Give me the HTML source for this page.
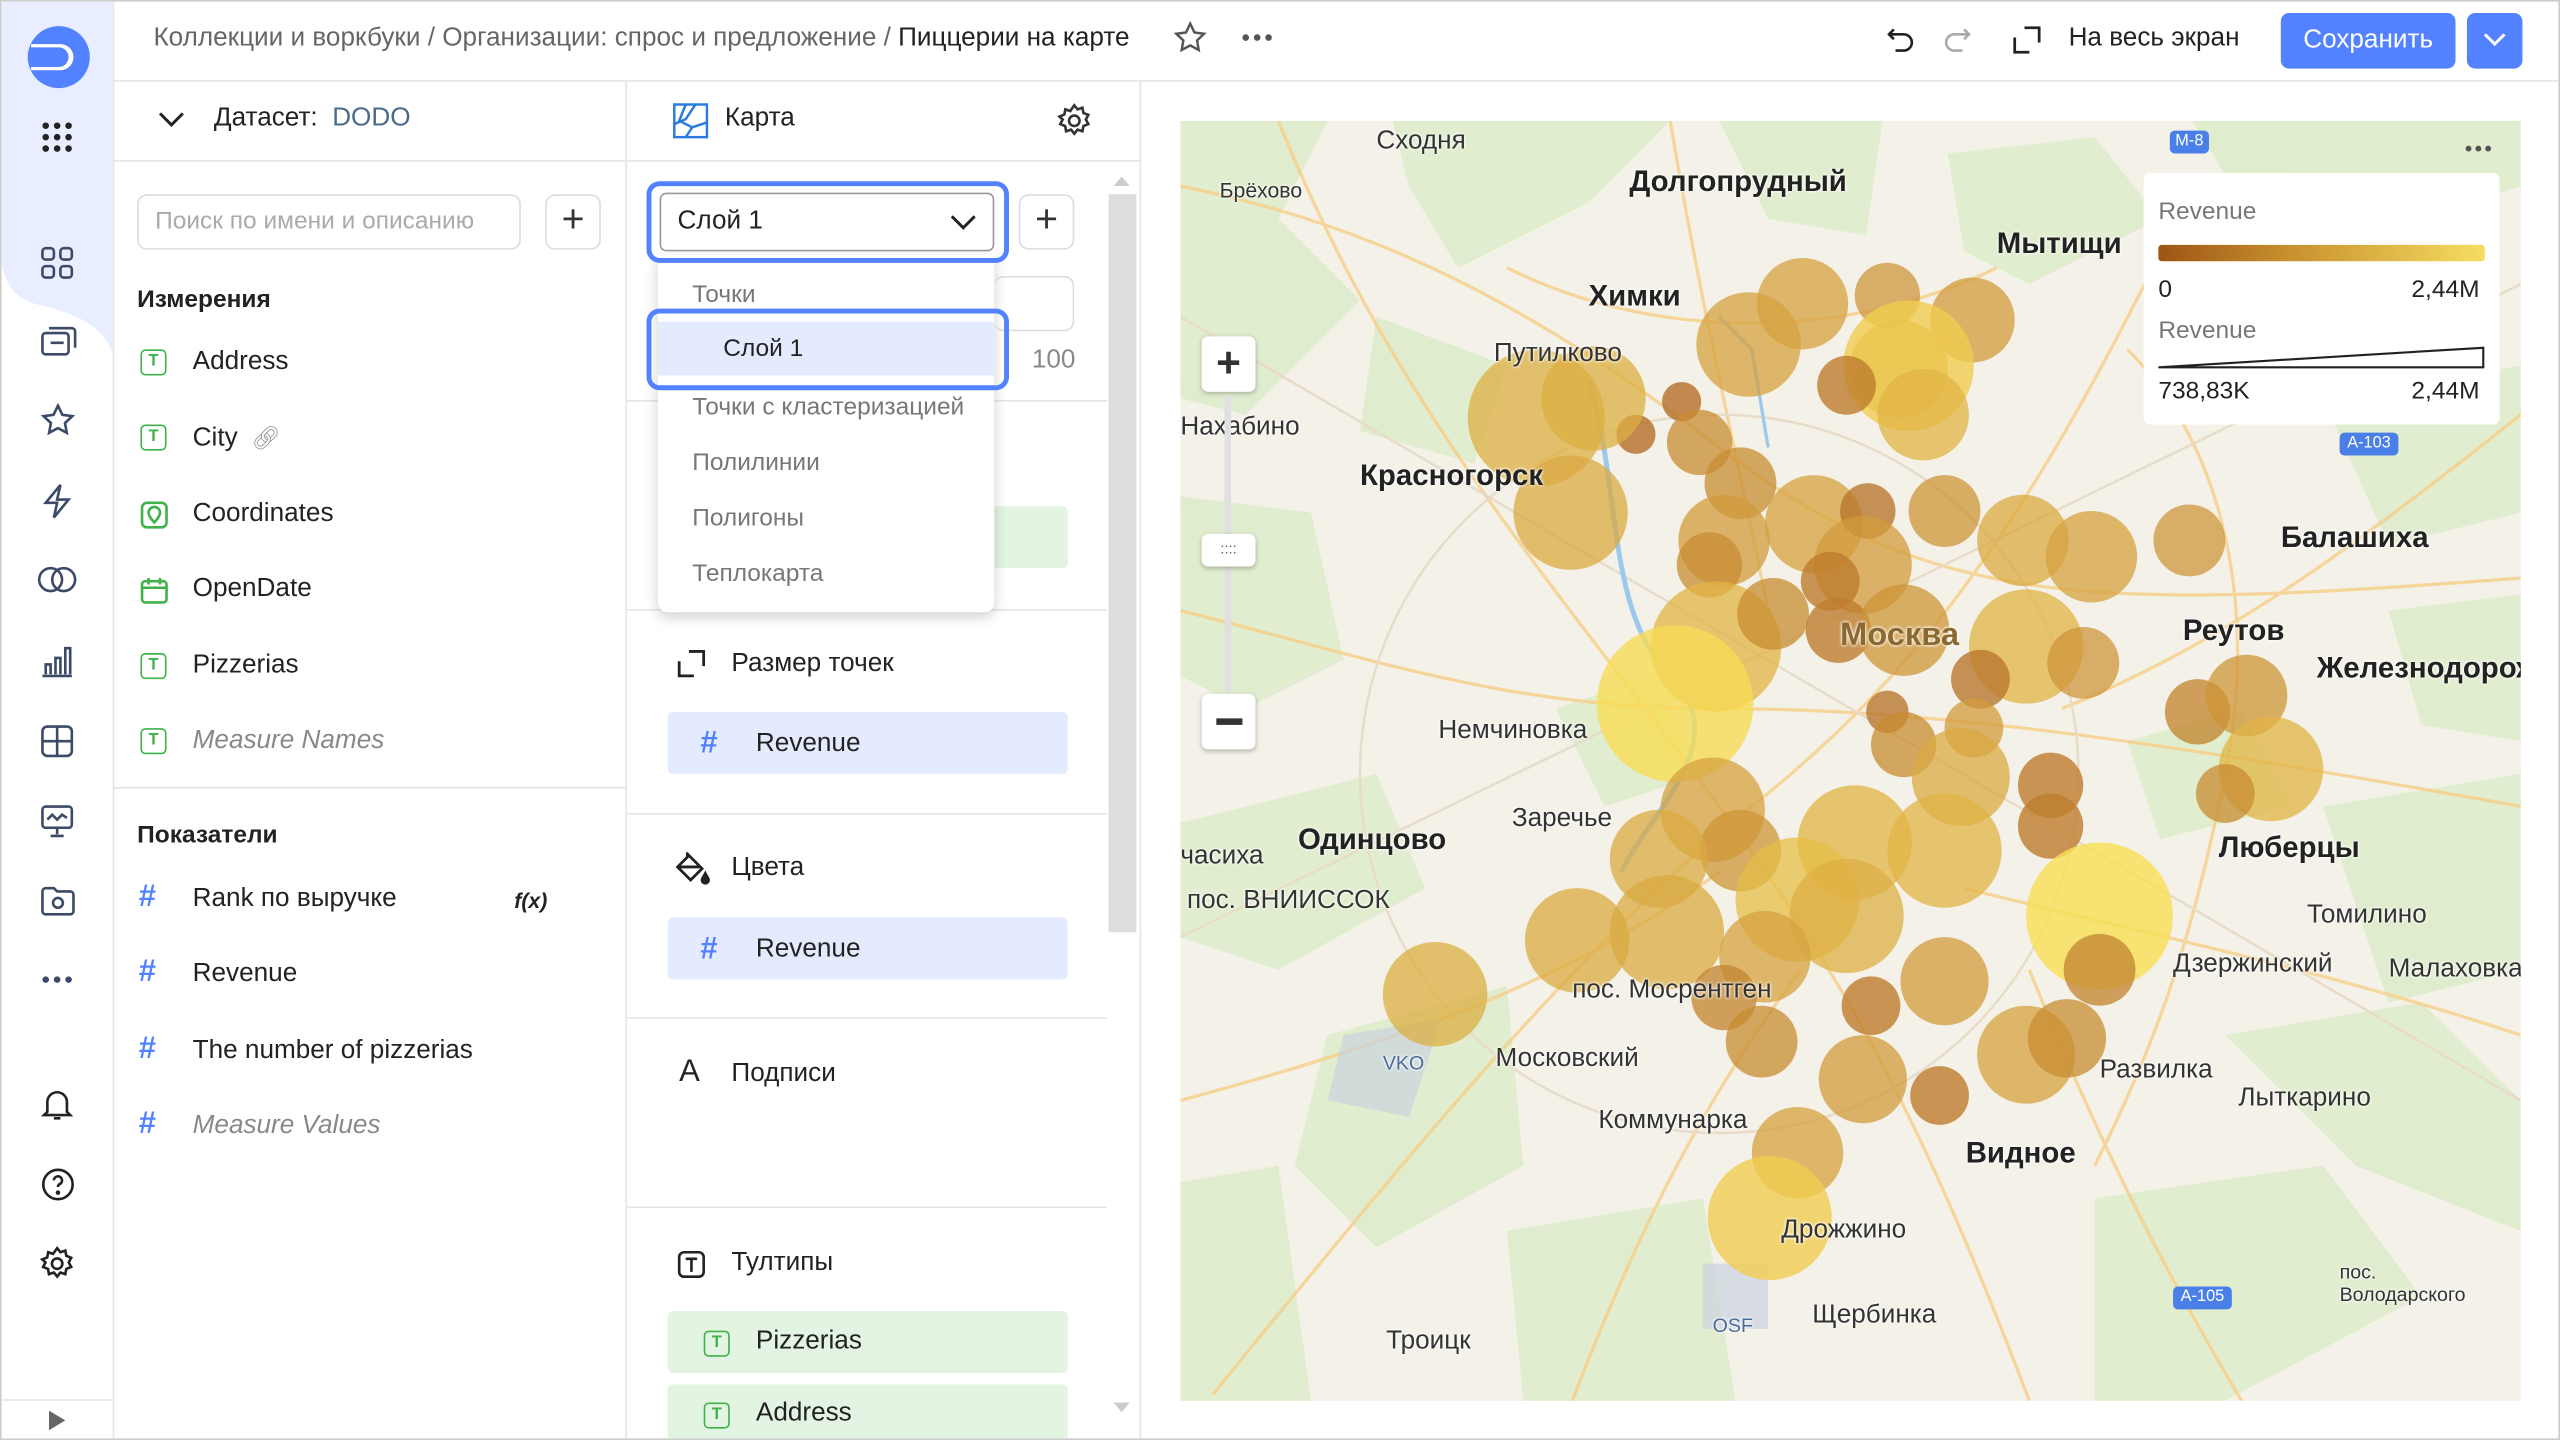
<!DOCTYPE html>
<html><head><meta charset="utf-8">
<style>
html,body{margin:0;padding:0;width:2560px;height:1440px;overflow:hidden;background:#fff}
#w{position:absolute;left:0;top:0;width:1568px;height:882px;transform:scale(1.632653);transform-origin:0 0;font-family:"Liberation Sans","Noto Sans CJK SC",sans-serif;color:#222;border:1px solid #ccc;box-sizing:border-box;overflow:hidden;background:#fff}
.a{position:absolute}
.t{position:absolute;white-space:nowrap;font-size:15px;line-height:18px}
.ic{position:absolute;width:16px;height:16px;border:1.7px solid #3fb24a;border-radius:3px;box-sizing:border-box;font-size:10px;font-weight:bold;color:#3fb24a;text-align:center;line-height:13px}
.hash{position:absolute;color:#5282ff;font-size:19px;font-weight:bold}
.pill{position:absolute;left:408px;width:245px;height:38px;background:#e5ebff;border-radius:3px}
.gpill{position:absolute;left:408px;width:245px;height:38px;background:#e3f4e3;border-radius:3px}
.hr{position:absolute;height:1px;background:#e5e5e5}
.ml{position:absolute;white-space:nowrap;font-size:16px;color:#333;text-shadow:0 0 2px #fff,0 0 2px #fff}
.mb{font-weight:bold;font-size:18px;color:#222}
</style></head><body><div id="w">

<!-- left nav -->
<div class="a" style="left:0;top:0;width:68px;height:882px;border-right:1px solid #e5e5e5;background:#fff"></div>
<svg class="a" style="left:0;top:0" width="68" height="230"><path d="M0 0H68V215C60 195 40 190 20 185C5 180 2 170 0 160Z" fill="#e8edff"/></svg>
<svg class="a" style="left:14px;top:12px" width="42" height="44"><circle cx="21" cy="22" r="19" fill="#5282ff"/><path d="M4 14H22A8 8 0 0 1 22 30H4" fill="#fff"/><path d="M4 16H21A6 6 0 0 1 21 28H4Z" fill="#5282ff"/></svg>
<svg class="a" style="left:24px;top:73px" width="20" height="20" fill="#222"><circle cx="3" cy="3" r="2"/><circle cx="10" cy="3" r="2"/><circle cx="17" cy="3" r="2"/><circle cx="3" cy="10" r="2"/><circle cx="10" cy="10" r="2"/><circle cx="17" cy="10" r="2"/><circle cx="3" cy="17" r="2"/><circle cx="10" cy="17" r="2"/><circle cx="17" cy="17" r="2"/></svg>
<svg class="a" style="left:24px;top:150px" width="20" height="20" fill="none" stroke="#3b4a66" stroke-width="1.6"><rect x="1" y="1" width="7" height="7" rx="2"/><rect x="12" y="1" width="7" height="7" rx="2"/><rect x="1" y="12" width="7" height="7" rx="2"/><rect x="12" y="12" width="7" height="7" rx="2"/></svg>
<svg class="a" style="left:24px;top:198px" width="22" height="20" fill="none" stroke="#3b4a66" stroke-width="1.6"><rect x="1" y="5" width="16" height="13" rx="2"/><path d="M5 2H19a2 2 0 0 1 2 2V14"/><path d="M6 11h8"/></svg>
<svg class="a" style="left:24px;top:246px" width="21" height="21" fill="none" stroke="#3b4a66" stroke-width="1.6"><path d="M10.5 1.5l2.7 5.6 6.1.8-4.5 4.2 1.1 6-5.4-2.9-5.4 2.9 1.1-6L1.7 7.9l6.1-.8z"/></svg>
<svg class="a" style="left:24px;top:295px" width="20" height="22" fill="none" stroke="#3b4a66" stroke-width="1.6"><path d="M12 1L3 12h7l-2 9 9-11h-7z"/></svg>
<svg class="a" style="left:22px;top:345px" width="24" height="18" fill="none" stroke="#3b4a66" stroke-width="1.6"><circle cx="8" cy="9" r="7"/><circle cx="16" cy="9" r="7"/></svg>
<svg class="a" style="left:24px;top:394px" width="20" height="20" fill="none" stroke="#3b4a66" stroke-width="1.6"><path d="M1 19h18M3 18v-6h3v6M9 18V8h3v10M15 18V2h3v16"/></svg>
<svg class="a" style="left:24px;top:443px" width="20" height="20" fill="none" stroke="#3b4a66" stroke-width="1.6"><rect x="1" y="1" width="18" height="18" rx="3"/><path d="M1 10h18M10 1v18"/></svg>
<svg class="a" style="left:24px;top:492px" width="20" height="20" fill="none" stroke="#3b4a66" stroke-width="1.6"><rect x="1" y="1" width="18" height="13" rx="2"/><path d="M4 9l3-3 3 3 3-3 3 2M10 14v4M6 19h8"/></svg>
<svg class="a" style="left:24px;top:541px" width="21" height="19" fill="none" stroke="#3b4a66" stroke-width="1.6"><path d="M1 4a2 2 0 0 1 2-2h5l2 2h8a2 2 0 0 1 2 2v10a2 2 0 0 1-2 2H3a2 2 0 0 1-2-2z"/><circle cx="10.5" cy="11" r="3"/></svg>
<svg class="a" style="left:24px;top:595px" width="20" height="8" fill="#3b4a66"><circle cx="3" cy="4" r="2"/><circle cx="10" cy="4" r="2"/><circle cx="17" cy="4" r="2"/></svg>
<svg class="a" style="left:24px;top:665px" width="20" height="22" fill="none" stroke="#222" stroke-width="1.6"><path d="M4 15V9a6 6 0 0 1 12 0v6l2 2H2zM8 19h4"/></svg>
<svg class="a" style="left:24px;top:714px" width="21" height="21" fill="none" stroke="#222" stroke-width="1.6"><circle cx="10.5" cy="10.5" r="9"/><path d="M8 8a2.5 2.5 0 1 1 3.5 2.3c-.7.3-1 .9-1 1.7"/><circle cx="10.5" cy="15.5" r=".6" fill="#222"/></svg>
<svg class="a" style="left:23px;top:762px" width="22" height="22" fill="none" stroke="#222" stroke-width="1.6"><circle cx="11" cy="11" r="3.2"/><path d="M11 1.5l2 2.5 3-1 .6 3.2 3 1.2-1.5 2.8 1.5 2.8-3 1.2-.6 3.2-3-1-2 2.5-2-2.5-3 1-.6-3.2-3-1.2 1.5-2.8L1.9 8.4l3-1.2.6-3.2 3 1z"/></svg>
<div class="a" style="left:0;top:856px;width:68px;height:1px;background:#e5e5e5"></div>
<svg class="a" style="left:29px;top:863px" width="10" height="12"><path d="M0 0L10 6 0 12z" fill="#666"/></svg>

<!-- header -->
<div class="hr" style="left:68px;top:48px;width:1500px"></div>
<div class="t" style="left:93px;top:14px;font-size:16px;color:#666">Коллекции и воркбуки / Организации: спрос и предложение / <span style="color:#222">Пиццерии на карте</span></div>
<svg class="a" style="left:718px;top:12px" width="20" height="20" fill="none" stroke="#555" stroke-width="1.5"><path d="M10 1.5l2.6 5.4 5.9.8-4.3 4.1 1 5.8L10 14.8l-5.2 2.8 1-5.8L1.5 7.7l5.9-.8z"/></svg>
<svg class="a" style="left:759px;top:19px" width="20" height="6" fill="#555"><circle cx="3" cy="3" r="2"/><circle cx="10" cy="3" r="2"/><circle cx="17" cy="3" r="2"/></svg>
<svg class="a" style="left:1154px;top:14px" width="18" height="18" fill="none" stroke="#222" stroke-width="1.6"><path d="M5 3L2 6l3 3M2 6h9a5 5 0 0 1 0 10H6"/></svg>
<svg class="a" style="left:1189px;top:14px" width="18" height="18" fill="none" stroke="#aaa" stroke-width="1.6"><path d="M13 3l3 3-3 3M16 6H7a5 5 0 0 0 0 10h5"/></svg>
<svg class="a" style="left:1232px;top:15px" width="17" height="17" fill="none" stroke="#222" stroke-width="1.7"><path d="M1 7V16H10M7 1H16V10"/></svg>
<div class="t" style="left:1266px;top:14px;font-size:16px">На весь экран</div>
<div class="a" style="left:1396px;top:7px;width:107px;height:34px;background:#5282ff;border-radius:5px;color:#fff;font-size:16px;line-height:34px;text-align:center">Сохранить</div>
<div class="a" style="left:1510px;top:7px;width:34px;height:34px;background:#5282ff;border-radius:5px"></div>
<svg class="a" style="left:1520px;top:18px" width="14" height="10" fill="none" stroke="#fff" stroke-width="1.8"><path d="M1 2l6 6 6-6"/></svg>

<!-- dataset panel -->
<div class="a" style="left:382px;top:48px;width:1px;height:834px;background:#e5e5e5"></div>
<div class="hr" style="left:68px;top:97px;width:315px"></div>
<svg class="a" style="left:96px;top:67px" width="16" height="11" fill="none" stroke="#222" stroke-width="1.8"><path d="M1 1.5l7 7 7-7"/></svg>
<div class="t" style="left:130px;top:63px;font-size:16px">Датасет: &nbsp;<span style="color:#4a6a8a">DODO</span></div>
<div class="a" style="left:83px;top:118px;width:235px;height:34px;border:1px solid #ddd;border-radius:6px;box-sizing:border-box"></div>
<div class="t" style="left:94px;top:126px;color:#aaa">Поиск по имени и описанию</div>
<div class="a" style="left:333px;top:118px;width:34px;height:34px;border:1px solid #ddd;border-radius:6px;box-sizing:border-box;font-size:24px;line-height:30px;text-align:center;color:#333">+</div>
<div class="t" style="left:83px;top:174px;font-weight:bold">Измерения</div>
<div class="ic" style="left:85px;top:213px">T</div><div class="t" style="left:117px;top:212px;font-size:16px">Address</div>
<div class="ic" style="left:85px;top:259px">T</div><div class="t" style="left:117px;top:258px;font-size:16px">City <span style="color:#999;font-size:14px">&nbsp;🔗︎</span></div>
<svg class="a" style="left:85px;top:306px" width="17" height="17" fill="none" stroke="#3fb24a" stroke-width="1.6"><rect x="1" y="1" width="15" height="15" rx="3"/><path d="M8.5 13s-3.5-3.5-3.5-6a3.5 3.5 0 0 1 7 0c0 2.5-3.5 6-3.5 6z"/></svg><div class="t" style="left:117px;top:305px;font-size:16px">Coordinates</div>
<svg class="a" style="left:85px;top:352px" width="17" height="17" fill="none" stroke="#3fb24a" stroke-width="1.6"><rect x="1" y="3" width="15" height="13" rx="2"/><path d="M1 7h15M5 1v4M12 1v4"/></svg><div class="t" style="left:117px;top:351px;font-size:16px">OpenDate</div>
<div class="ic" style="left:85px;top:399px">T</div><div class="t" style="left:117px;top:398px;font-size:16px">Pizzerias</div>
<div class="ic" style="left:85px;top:445px">T</div><div class="t" style="left:117px;top:444px;font-size:16px;color:#888;font-style:italic">Measure Names</div>
<div class="hr" style="left:68px;top:481px;width:315px"></div>
<div class="t" style="left:83px;top:502px;font-weight:bold">Показатели</div>
<div class="hash" style="left:84px;top:538px">#</div><div class="t" style="left:117px;top:541px;font-size:16px">Rank по выручке</div><div class="t" style="left:314px;top:542px;font-size:13px;font-style:italic;font-weight:bold">f(x)</div>
<div class="hash" style="left:84px;top:584px">#</div><div class="t" style="left:117px;top:587px;font-size:16px">Revenue</div>
<div class="hash" style="left:84px;top:631px">#</div><div class="t" style="left:117px;top:634px;font-size:16px">The number of pizzerias</div>
<div class="hash" style="left:84px;top:677px">#</div><div class="t" style="left:117px;top:680px;font-size:16px;color:#888;font-style:italic">Measure Values</div>

<!-- middle panel -->
<div class="a" style="left:697px;top:48px;width:1px;height:834px;background:#e5e5e5"></div>
<div class="hr" style="left:383px;top:97px;width:314px"></div>
<svg class="a" style="left:411px;top:62px" width="22" height="22" fill="none" stroke="#2a7ae2" stroke-width="1.5"><rect x="1" y="1" width="20" height="20"/><path d="M8 1L4 11l8 4-4 6M1 13l7-3 6-9M12 15l9-3"/></svg>
<div class="t" style="left:443px;top:63px;font-size:16px">Карта</div>
<svg class="a" style="left:646px;top:62px" width="22" height="22" fill="none" stroke="#333" stroke-width="1.6"><circle cx="11" cy="11" r="3.2"/><path d="M11 1.5l2 2.5 3-1 .6 3.2 3 1.2-1.5 2.8 1.5 2.8-3 1.2-.6 3.2-3-1-2 2.5-2-2.5-3 1-.6-3.2-3-1.2 1.5-2.8L1.9 8.4l3-1.2.6-3.2 3 1z"/></svg>
<div class="a" style="left:678px;top:118px;width:17px;height:452px;background:#ddd"></div>
<svg class="a" style="left:681px;top:105px" width="10" height="8"><path d="M0 8L5 2 10 8z" fill="#ccc"/></svg>
<svg class="a" style="left:681px;top:858px" width="10" height="8"><path d="M0 0L5 6 10 0z" fill="#ccc"/></svg>
<div class="a" style="left:623px;top:118px;width:34px;height:34px;border:1px solid #ddd;border-radius:6px;box-sizing:border-box;font-size:24px;line-height:30px;text-align:center;color:#333">+</div>
<div class="a" style="left:608px;top:168px;width:49px;height:34px;border:1px solid #ddd;border-radius:6px;box-sizing:border-box;border-left:none"></div>
<div class="t" style="left:631px;top:211px;font-size:16px;color:#888">100</div>
<div class="hr" style="left:383px;top:244px;width:294px"></div>
<div class="a" style="left:608px;top:309px;width:45px;height:38px;background:#e3f4e3;border-radius:0 3px 3px 0"></div>
<div class="hr" style="left:383px;top:372px;width:294px"></div>
<svg class="a" style="left:414px;top:397px" width="17" height="17" fill="none" stroke="#222" stroke-width="1.7"><path d="M1 7V16H10M7 1H16V10"/></svg>
<div class="t" style="left:447px;top:397px;font-size:16px">Размер точек</div>
<div class="pill" style="top:435px"></div><div class="hash" style="left:428px;top:444px">#</div><div class="t" style="left:462px;top:446px;font-size:16px">Revenue</div>
<div class="hr" style="left:383px;top:497px;width:294px"></div>
<svg class="a" style="left:412px;top:521px" width="22" height="20" fill="none" stroke="#222" stroke-width="1.7"><path d="M8 1l9 9-7 7-8-8 6-6zM2 9h14"/><path d="M19 13c1 2 2 3 2 4a2 2 0 0 1-4 0c0-1 1-2 2-4z" fill="#222"/></svg>
<div class="t" style="left:447px;top:522px;font-size:16px">Цвета</div>
<div class="pill" style="top:561px"></div><div class="hash" style="left:428px;top:570px">#</div><div class="t" style="left:462px;top:572px;font-size:16px">Revenue</div>
<div class="hr" style="left:383px;top:622px;width:294px"></div>
<div class="t" style="left:415px;top:647px;font-size:19px">A</div>
<div class="t" style="left:447px;top:648px;font-size:16px">Подписи</div>
<div class="hr" style="left:383px;top:738px;width:294px"></div>
<svg class="a" style="left:414px;top:765px" width="17" height="17" fill="none" stroke="#222" stroke-width="1.6"><rect x="1" y="1" width="15" height="15" rx="3"/><path d="M5 5h7M8.5 5v8"/></svg>
<div class="t" style="left:447px;top:764px;font-size:16px">Тултипы</div>
<div class="gpill" style="top:802px"></div><div class="ic" style="left:430px;top:814px">T</div><div class="t" style="left:462px;top:812px;font-size:16px">Pizzerias</div>
<div class="gpill" style="top:847px"></div><div class="ic" style="left:430px;top:858px">T</div><div class="t" style="left:462px;top:856px;font-size:16px">Address</div>

<!-- dropdown -->
<div class="a" style="left:402px;top:155px;width:206px;height:219px;background:#fff;border-radius:0 0 6px 6px;box-shadow:0 3px 8px rgba(0,0,0,.18)"></div>
<div class="t" style="left:423px;top:171px;color:#777;font-size:15px">Точки</div>
<div class="a" style="left:402px;top:196px;width:206px;height:33px;background:#e5ebff"></div>
<div class="t" style="left:442px;top:204px;font-size:15px">Слой 1</div>
<div class="t" style="left:423px;top:240px;color:#777">Точки с кластеризацией</div>
<div class="t" style="left:423px;top:274px;color:#777">Полилинии</div>
<div class="t" style="left:423px;top:308px;color:#777">Полигоны</div>
<div class="t" style="left:423px;top:342px;color:#777">Теплокарта</div>
<div class="a" style="left:403px;top:117px;width:205px;height:36px;border:1px solid #999;border-radius:4px;box-sizing:border-box;background:#fff"></div>
<div class="t" style="left:414px;top:126px;font-size:16px">Слой 1</div>
<svg class="a" style="left:581px;top:130px" width="16" height="10" fill="none" stroke="#222" stroke-width="1.8"><path d="M1 1.5l7 7 7-7"/></svg>
<div class="a" style="left:395px;top:110px;width:222px;height:50px;border:3px solid #5282ff;border-radius:8px;box-sizing:border-box"></div>
<div class="a" style="left:395px;top:188px;width:222px;height:50px;border:3px solid #5282ff;border-radius:8px;box-sizing:border-box"></div>

<!-- map -->
<div class="a" style="left:722px;top:73px;width:821px;height:784px;overflow:hidden;background:#f4f1e8">
<svg width="821" height="784" style="position:absolute;left:0;top:0">
<g fill="#dcecc9" opacity=".85">
<path d="M0 0H90L60 60 110 110 40 180 0 170Z"/><path d="M130 0H300L250 50 170 90 140 40Z"/><path d="M330 0H430L420 70 360 60Z"/>
<path d="M470 20L560 10 600 60 520 100 480 80Z"/><path d="M620 0H821V40L720 70 650 50Z"/><path d="M700 170L821 150V240L740 260Z"/>
<path d="M0 230L80 240 100 330 40 360 0 340Z"/><path d="M120 120L200 150 180 210 110 190Z"/><path d="M0 430L120 400 150 470 60 520 0 500Z"/>
<path d="M90 560L200 530 210 640 120 690 70 640Z"/><path d="M0 650L60 640 80 784H0Z"/><path d="M200 680L320 660 340 784H210Z"/>
<path d="M560 660L700 640 760 720 640 784H560Z"/><path d="M700 420L821 400V520L740 540Z"/><path d="M640 560L760 540 821 600V680L720 640Z"/>
<path d="M580 380L650 360 680 420 600 440Z"/><path d="M230 360L290 340 320 400 260 420Z"/><path d="M740 300L821 290V380L760 370Z"/>
</g>
<g fill="none" stroke="#f7cf88" stroke-width="2" opacity=".8">
<path d="M0 40C100 60 200 100 330 200S560 300 821 280"/><path d="M20 780C150 620 250 500 350 420S520 250 620 40"/>
<path d="M0 300C120 330 200 360 330 360S600 380 821 420"/><path d="M60 0C120 150 200 250 300 380S450 600 520 784"/>
<path d="M300 0C320 120 340 200 360 300"/><path d="M821 180C720 260 640 320 540 360"/><path d="M821 560C700 520 600 500 480 470"/>
<path d="M0 600C150 560 250 520 330 460"/><path d="M240 784C280 680 320 600 380 520"/><path d="M650 784C600 700 560 620 520 520"/>
<path d="M200 90C300 140 420 130 500 90"/><path d="M580 140C640 200 660 300 640 400S600 560 560 640"/>
</g>
<g fill="none" stroke="#e8dcc8" stroke-width="1.5"><circle cx="330" cy="400" r="220"/><path d="M0 120L821 600M0 500L821 100"/></g>
<path d="M250 160C270 220 260 300 300 340S290 420 270 460" stroke="#9cc8ee" stroke-width="3" fill="none"/>
<path d="M330 120L350 140 360 200" stroke="#9cc8ee" stroke-width="2" fill="none"/>
<g fill="#c9d3e0" opacity=".7"><path d="M100 560L160 550 140 610 90 600Z"/><path d="M320 700L360 700 360 740 320 740Z"/></g>
</svg>
<svg width="821" height="784" style="position:absolute;left:0;top:0">
<g>
<circle cx="381" cy="112" r="28" fill="rgba(214,162,64,.75)"/><circle cx="433" cy="107" r="20" fill="rgba(205,150,60,.75)"/><circle cx="485" cy="122" r="26" fill="rgba(210,155,60,.75)"/>
<circle cx="440" cy="152" r="30" fill="rgba(210,160,60,.75)"/><circle cx="446" cy="150" r="40" fill="rgba(240,205,80,.8)"/><circle cx="455" cy="180" r="28" fill="rgba(225,180,70,.75)"/>
<circle cx="348" cy="137" r="32" fill="rgba(214,162,64,.75)"/><circle cx="408" cy="162" r="18" fill="rgba(190,125,45,.8)"/>
<circle cx="307" cy="172" r="12" fill="rgba(180,110,40,.8)"/><circle cx="279" cy="192" r="12" fill="rgba(180,110,40,.8)"/>
<circle cx="218" cy="182" r="42" fill="rgba(220,175,65,.75)"/><circle cx="253" cy="170" r="32" fill="rgba(220,175,65,.75)"/><circle cx="239" cy="240" r="35" fill="rgba(218,170,65,.75)"/>
<circle cx="318" cy="197" r="20" fill="rgba(200,140,50,.75)"/><circle cx="343" cy="222" r="22" fill="rgba(200,140,50,.75)"/><circle cx="333" cy="257" r="28" fill="rgba(210,155,60,.75)"/>
<circle cx="324" cy="272" r="20" fill="rgba(200,140,50,.75)"/><circle cx="388" cy="247" r="30" fill="rgba(214,162,64,.75)"/><circle cx="421" cy="239" r="17" fill="rgba(185,120,45,.8)"/>
<circle cx="418" cy="272" r="30" fill="rgba(210,155,60,.75)"/><circle cx="468" cy="239" r="22" fill="rgba(205,148,55,.75)"/><circle cx="516" cy="257" r="28" fill="rgba(218,170,65,.75)"/>
<circle cx="558" cy="267" r="28" fill="rgba(214,162,64,.75)"/><circle cx="618" cy="257" r="22" fill="rgba(205,150,60,.75)"/>
<circle cx="328" cy="322" r="40" fill="rgba(225,180,70,.75)"/><circle cx="363" cy="302" r="22" fill="rgba(200,140,50,.75)"/><circle cx="403" cy="312" r="20" fill="rgba(190,125,45,.8)"/>
<circle cx="443" cy="312" r="28" fill="rgba(205,148,55,.75)"/><circle cx="398" cy="282" r="18" fill="rgba(190,125,45,.8)"/>
<circle cx="303" cy="357" r="48" fill="rgba(248,220,85,.8)"/><circle cx="518" cy="322" r="35" fill="rgba(225,180,70,.75)"/><circle cx="553" cy="332" r="22" fill="rgba(205,150,60,.75)"/>
<circle cx="490" cy="342" r="18" fill="rgba(185,120,45,.8)"/><circle cx="486" cy="372" r="18" fill="rgba(210,155,60,.75)"/><circle cx="433" cy="362" r="13" fill="rgba(185,120,45,.8)"/>
<circle cx="443" cy="382" r="20" fill="rgba(200,140,50,.75)"/><circle cx="623" cy="362" r="20" fill="rgba(195,135,50,.78)"/><circle cx="653" cy="352" r="25" fill="rgba(205,148,55,.75)"/>
<circle cx="668" cy="397" r="32" fill="rgba(225,180,70,.75)"/><circle cx="640" cy="412" r="18" fill="rgba(200,140,50,.75)"/>
<circle cx="478" cy="402" r="30" fill="rgba(218,170,65,.75)"/><circle cx="533" cy="407" r="20" fill="rgba(190,125,45,.8)"/><circle cx="533" cy="432" r="20" fill="rgba(190,125,45,.8)"/>
<circle cx="326" cy="422" r="32" fill="rgba(214,162,64,.75)"/><circle cx="343" cy="447" r="25" fill="rgba(205,148,55,.75)"/><circle cx="293" cy="452" r="30" fill="rgba(218,170,65,.75)"/>
<circle cx="413" cy="442" r="35" fill="rgba(225,180,70,.75)"/><circle cx="468" cy="447" r="35" fill="rgba(225,180,70,.75)"/><circle cx="378" cy="477" r="38" fill="rgba(230,190,72,.75)"/>
<circle cx="408" cy="487" r="35" fill="rgba(222,175,68,.75)"/><circle cx="243" cy="502" r="32" fill="rgba(218,170,65,.75)"/><circle cx="298" cy="497" r="35" fill="rgba(218,170,65,.75)"/>
<circle cx="358" cy="512" r="28" fill="rgba(214,162,64,.75)"/><circle cx="563" cy="487" r="45" fill="rgba(248,222,88,.82)"/><circle cx="563" cy="520" r="22" fill="rgba(195,135,50,.78)"/>
<circle cx="156" cy="535" r="32" fill="rgba(220,175,65,.75)"/><circle cx="333" cy="537" r="20" fill="rgba(195,135,50,.78)"/><circle cx="423" cy="542" r="18" fill="rgba(190,125,45,.8)"/>
<circle cx="468" cy="527" r="27" fill="rgba(210,155,60,.75)"/><circle cx="356" cy="564" r="22" fill="rgba(200,140,50,.75)"/><circle cx="518" cy="572" r="30" fill="rgba(214,162,64,.75)"/>
<circle cx="543" cy="562" r="24" fill="rgba(200,140,50,.75)"/><circle cx="418" cy="587" r="27" fill="rgba(210,155,60,.75)"/><circle cx="465" cy="597" r="18" fill="rgba(190,125,45,.8)"/>
<circle cx="378" cy="632" r="28" fill="rgba(214,162,64,.75)"/><circle cx="361" cy="672" r="38" fill="rgba(240,205,80,.8)"/>
</g>
</svg>
<div class="ml" style="left:120px;top:4px">Сходня</div>
<div class="ml" style="left:24px;top:35px;font-size:13px">Брёхово</div>
<div class="ml mb" style="left:275px;top:27px">Долгопрудный</div>
<div class="ml mb" style="left:500px;top:65px">Мытищи</div>
<div class="ml mb" style="left:250px;top:97px">Химки</div>
<div class="ml" style="left:192px;top:134px">Путилково</div>
<div class="ml" style="left:0;top:179px">Нахабино</div>
<div class="ml mb" style="left:110px;top:207px">Красногорск</div>
<div class="ml mb" style="left:674px;top:245px">Балашиха</div>
<div class="ml mb" style="left:614px;top:302px">Реутов</div>
<div class="ml mb" style="left:696px;top:325px">Железнодорож</div>
<div class="ml" style="left:158px;top:365px">Немчиновка</div>
<div class="ml" style="left:203px;top:419px">Заречье</div>
<div class="ml mb" style="left:72px;top:430px">Одинцово</div>
<div class="ml" style="left:0;top:442px">часиха</div>
<div class="ml" style="left:4px;top:469px">пос. ВНИИССОК</div>
<div class="ml mb" style="left:636px;top:435px">Люберцы</div>
<div class="ml" style="left:690px;top:478px">Томилино</div>
<div class="ml" style="left:608px;top:508px">Дзержинский</div>
<div class="ml" style="left:740px;top:511px">Малаховка</div>
<div class="ml" style="left:240px;top:524px">пос. Мосрентген</div>
<div class="ml" style="left:193px;top:566px">Московский</div>
<div class="ml" style="left:563px;top:573px">Развилка</div>
<div class="ml" style="left:648px;top:590px">Лыткарино</div>
<div class="ml" style="left:256px;top:604px">Коммунарка</div>
<div class="ml mb" style="left:481px;top:622px">Видное</div>
<div class="ml" style="left:368px;top:671px">Дрожжино</div>
<div class="ml" style="left:710px;top:698px;font-size:12px">пос.<br>Володарского</div>
<div class="ml" style="left:387px;top:723px">Щербинка</div>
<div class="ml" style="left:126px;top:739px">Троицк</div>
<div class="ml" style="left:124px;top:570px;font-size:12px;color:#4a6a9a">VKO</div>
<div class="ml" style="left:326px;top:731px;font-size:12px;color:#4a6a9a">OSF</div>
<div class="ml" style="left:404px;top:304px;font-size:20px;color:#8a6a30;font-weight:bold">Москва</div>
<div class="a" style="left:606px;top:6px;width:24px;height:14px;background:#4a7fe8;border-radius:3px;color:#fff;font-size:10px;text-align:center;line-height:14px">M-8</div>
<div class="a" style="left:710px;top:191px;width:36px;height:14px;background:#4a7fe8;border-radius:3px;color:#fff;font-size:10px;text-align:center;line-height:14px">A-103</div>
<div class="a" style="left:608px;top:714px;width:36px;height:14px;background:#4a7fe8;border-radius:3px;color:#fff;font-size:10px;text-align:center;line-height:14px">A-105</div>
<svg class="a" style="left:786px;top:14px" width="18" height="6" fill="#555"><circle cx="3" cy="3" r="1.8"/><circle cx="9" cy="3" r="1.8"/><circle cx="15" cy="3" r="1.8"/></svg>
<!-- zoom control -->
<div class="a" style="left:13px;top:132px;width:33px;height:34px;background:#fff;border-radius:4px;box-shadow:0 1px 3px rgba(0,0,0,.25);font-size:26px;font-weight:bold;text-align:center;line-height:33px;color:#333">+</div>
<div class="a" style="left:27px;top:168px;width:4px;height:182px;background:#e0e0e0;border-radius:2px"></div>
<div class="a" style="left:13px;top:253px;width:33px;height:20px;background:#fff;border-radius:4px;box-shadow:0 1px 3px rgba(0,0,0,.25);font-size:9px;text-align:center;line-height:18px;color:#666">::::</div>
<div class="a" style="left:13px;top:351px;width:33px;height:34px;background:#fff;border-radius:4px;box-shadow:0 1px 3px rgba(0,0,0,.25)"><div style="position:absolute;left:9px;top:15px;width:16px;height:4px;background:#333"></div></div>
<!-- legend -->
<div class="a" style="left:590px;top:32px;width:218px;height:154px;background:#fff;border-radius:4px"></div>
<div class="t" style="left:599px;top:47px;color:#777">Revenue</div>
<div class="a" style="left:599px;top:76px;width:200px;height:10px;background:linear-gradient(90deg,#9c5514,#c8902e 40%,#f6dd62);border-radius:2px"></div>
<div class="t" style="left:599px;top:95px;color:#222">0</div><div class="t" style="left:754px;top:95px">2,44M</div>
<div class="t" style="left:599px;top:120px;color:#777">Revenue</div>
<svg class="a" style="left:598px;top:138px" width="202" height="15"><path d="M1 13L200 1V13Z" fill="none" stroke="#222" stroke-width="1.3"/></svg>
<div class="t" style="left:599px;top:157px">738,83K</div><div class="t" style="left:754px;top:157px">2,44M</div>
</div>

</div></body></html>
